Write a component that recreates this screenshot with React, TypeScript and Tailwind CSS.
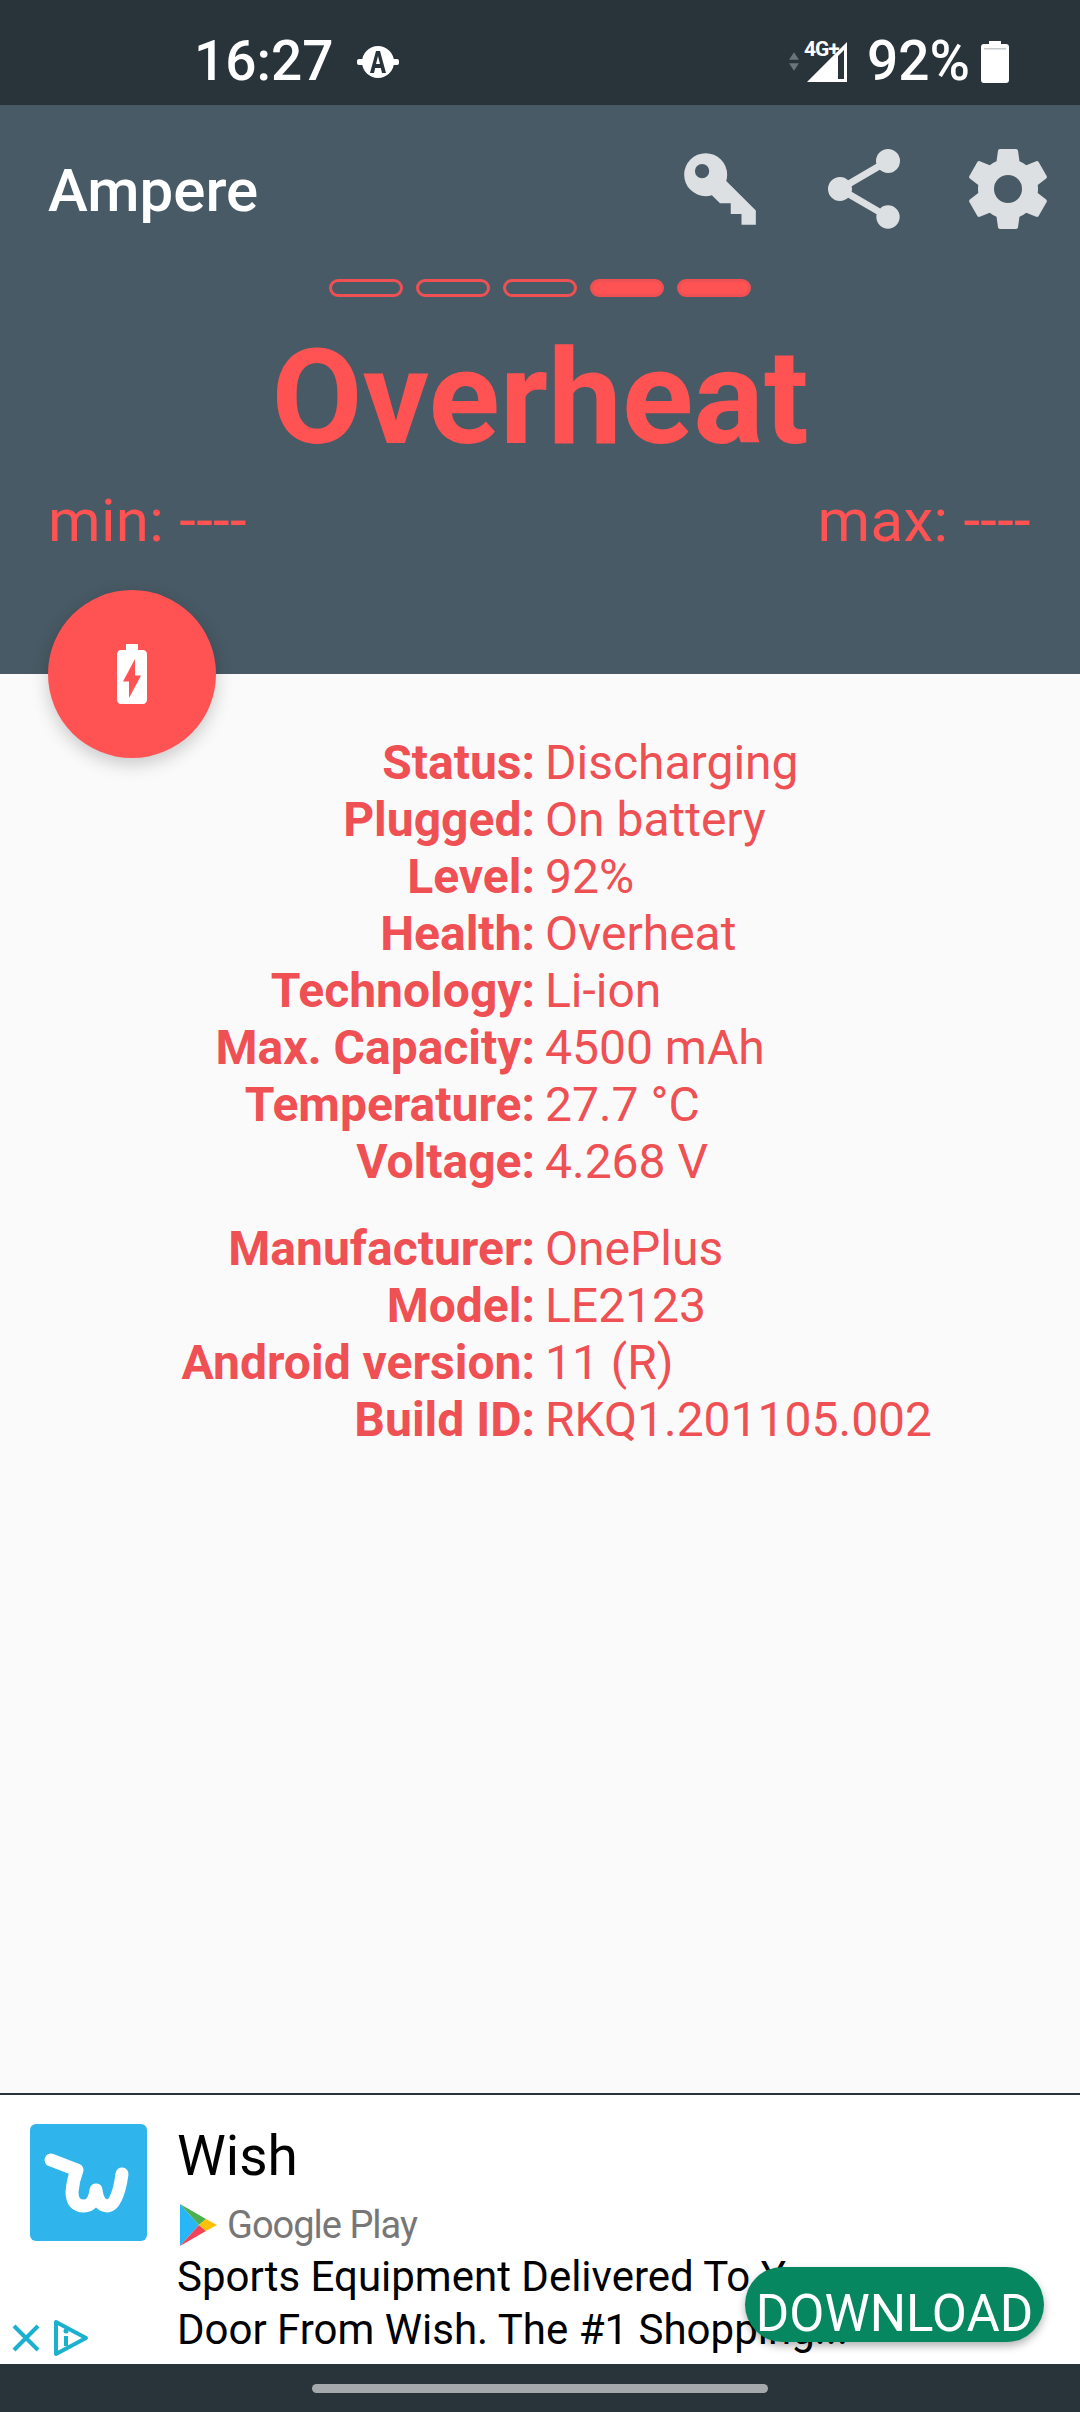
const infoRows = [
  ['Status:', 'Discharging'],
  ['Plugged:', 'On battery'],
  ['Level:', '92%'],
  ['Health:', 'Overheat'],
  ['Technology:', 'Li-ion'],
  ['Max. Capacity:', '4500 mAh'],
  ['Temperature:', '27.7 °C'],
  ['Voltage:', '4.268 V'],
];

const deviceRows = [
  ['Manufacturer:', 'OnePlus'],
  ['Model:', 'LE2123'],
  ['Android version:', '11 (R)'],
  ['Build ID:', 'RKQ1.201105.002'],
];

function InfoTable({ rows }: { rows: string[][] }) {
  return (
    <div className="grid grid-cols-[535px_1fr] gap-x-[10px] text-[48px] leading-[57px] text-[#ef5053]">
      {rows.map(([label, value]) => (
        <div key={label} className="contents">
          <span className="text-right font-bold">{label}</span>
          <span>{value}</span>
        </div>
      ))}
    </div>
  );
}

function StatusBar() {
  return (
    <div className="h-[105px] bg-[#29333a] flex items-center text-white text-[55px] font-medium pl-[194px] pr-[71px] pt-[18px]">
      <span className="leading-none">16:27</span>
      <svg viewBox="0 0 42 42" className="w-[42px] h-[42px] ml-[23px]">
        <circle cx="21" cy="21" r="16" fill="#fff" />
        <rect x="0" y="18" width="42" height="6" rx="2" fill="#fff" />
        <path d="M13 32 19 10h4l6 22h-4l-1.2-5h-5.6L17 32zM19 23h4l-2-8z" fill="#29333a" />
      </svg>
      <div className="flex-1" />
      <svg viewBox="0 0 20 34" className="w-[14px] h-[21px] mr-[6px]">
        <path d="M10 2 18 14H2zM2 20h16l-8 12z" fill="#6b7479" />
      </svg>
      <div className="relative w-[40px] h-[40px]">
        <svg viewBox="0 0 40 40" className="w-[40px] h-[40px]">
          <path d="M0 40 40 0v40zM31 37h6V8l-6 6z" fill="#fff" fillRule="evenodd" />
        </svg>
        <span className="absolute left-[-3px] top-[-3px] text-[21px] leading-[21px] font-bold tracking-[-1px]">4G+</span>
      </div>
      <span className="ml-[20px] leading-none">92%</span>
      <svg viewBox="0 0 28 42" className="w-[28px] h-[42px] ml-[11px]">
        <path d="M8 0h12v3h5a3 3 0 0 1 3 3v33a3 3 0 0 1-3 3H3a3 3 0 0 1-3-3V6a3 3 0 0 1 3-3h5z" fill="#fff" />
        <rect x="3" y="7" width="22" height="1.5" fill="#c5cacc" />
      </svg>
    </div>
  );
}

function Toolbar() {
  return (
    <div className="h-[168px] flex items-center">
      <h1 className="flex-1 pl-[48px] pt-[4px] text-[60px] font-medium text-white">Ampere</h1>
      <button className="w-[144px] flex justify-center">
        <svg viewBox="0 0 24 24" className="w-[86px] h-[86px]" fill="#dce0e3">
          <path d="M22,18V22H18V19H15V16H12L9.74,13.74C9.19,13.91 8.61,14 8,14A6,6 0 0,1 2,8A6,6 0 0,1 8,2A6,6 0 0,1 14,8C14,8.61 13.91,9.19 13.74,9.74L22,18M7,5A2,2 0 0,0 5,7A2,2 0 0,0 7,9A2,2 0 0,0 9,7A2,2 0 0,0 7,5Z" />
        </svg>
      </button>
      <button className="w-[144px] flex justify-center">
        <svg viewBox="0 0 24 24" className="w-[96px] h-[96px]" fill="#dce0e3">
          <path d="M18,16.08C17.24,16.08 16.56,16.38 16.04,16.85L8.91,12.7C8.96,12.47 9,12.24 9,12C9,11.76 8.96,11.53 8.91,11.3L15.96,7.19C16.5,7.69 17.21,8 18,8A3,3 0 0,0 21,5A3,3 0 0,0 18,2A3,3 0 0,0 15,5C15,5.24 15.04,5.47 15.09,5.7L8.04,9.81C7.5,9.31 6.79,9 6,9A3,3 0 0,0 3,12A3,3 0 0,0 6,15C6.79,15 7.5,14.69 8.04,14.19L15.16,18.34C15.11,18.55 15.08,18.77 15.08,19C15.08,20.61 16.39,21.91 18,21.91C19.61,21.91 20.92,20.61 20.92,19A2.92,2.92 0 0,0 18,16.08Z" />
        </svg>
      </button>
      <button className="w-[144px] flex justify-center">
        <svg viewBox="0 0 24 24" className="w-[96px] h-[96px]" fill="#dce0e3">
          <path d="M12 15.5A3.5 3.5 0 0 1 8.5 12 3.5 3.5 0 0 1 12 8.5a3.5 3.5 0 0 1 3.5 3.5 3.5 3.5 0 0 1-3.5 3.5m7.43-2.53c.04-.32.07-.64.07-.97 0-.33-.03-.66-.07-1l2.11-1.63c.19-.15.24-.42.12-.64l-2-3.46c-.12-.22-.39-.31-.61-.22l-2.49 1c-.52-.39-1.06-.73-1.69-.98l-.37-2.65A.506.506 0 0 0 14 2h-4c-.25 0-.46.18-.5.42l-.37 2.65c-.63.25-1.17.59-1.69.98l-2.49-1c-.22-.09-.49 0-.61.22l-2 3.46c-.13.22-.07.49.12.64L4.57 11c-.04.34-.07.67-.07 1 0 .33.03.65.07.97l-2.11 1.66c-.19.15-.25.42-.12.64l2 3.46c.12.22.39.3.61.22l2.49-1.01c.52.4 1.06.74 1.69.99l.37 2.65c.04.24.25.42.5.42h4c.25 0 .46-.18.5-.42l.37-2.65c.63-.26 1.17-.59 1.69-.99l2.49 1.01c.22.08.49 0 .61-.22l2-3.46c.12-.22.07-.49-.12-.64l-2.11-1.66Z" />
        </svg>
      </button>
    </div>
  );
}

function Pills() {
  return (
    <div className="flex justify-center gap-[13px] pt-[6px] pr-[1px]">
      <div className="w-[74px] h-[18px] rounded-full border-[3px] border-[#ef5053]" />
      <div className="w-[74px] h-[18px] rounded-full border-[3px] border-[#ef5053]" />
      <div className="w-[74px] h-[18px] rounded-full border-[3px] border-[#ef5053]" />
      <div className="w-[74px] h-[18px] rounded-full border-[3px] border-[#ef5053] bg-[#ff5252]" />
      <div className="w-[74px] h-[18px] rounded-full border-[3px] border-[#ef5053] bg-[#ff5252]" />
    </div>
  );
}

function AdBanner() {
  return (
    <div className="relative h-[271px] bg-white flex overflow-hidden border-t-[2px] border-[#29333a]">
      <div className="w-[177px] shrink-0 pl-[30px] pt-[29px]">
        <div className="w-[117px] h-[117px] rounded-[6px] bg-[#2fb5ec]">
          <svg viewBox="0 0 117 117" className="w-[117px] h-[117px]">
            <path d="M21 36 47 46Q43 56 42 68Q42 82 54 82Q64 82 66 66Q68 82 78 82Q88 80 92 50" fill="none" stroke="#fff" strokeWidth="13" strokeLinecap="round" strokeLinejoin="round" />
          </svg>
        </div>
      </div>
      <div className="flex-1 text-black">
        <div className="text-[55px] leading-[64px] pt-[29px]">Wish</div>
        <div className="flex items-center h-[56px] mt-[9px] pl-[3px]">
          <svg viewBox="0 0 37 44" className="w-[37px] h-[44px]">
            <path d="M0 1v42l19-21z" fill="#29b6f6" />
            <path d="M0 1l26 15-7 6z" fill="#4caf50" />
            <path d="M0 43l26-15-7-6z" fill="#f44356" />
            <path d="M26 16l11 6-11 6-7-6z" fill="#ffc107" />
          </svg>
          <span className="ml-[10px] text-[38px] tracking-[-1px] text-[#777]">Google Play</span>
        </div>
        <div className="text-[42px] leading-[53px] -mt-[3px] whitespace-nowrap">
          <div>Sports Equipment Delivered To Your</div>
          <div>Door From Wish. The #1 Shopping...</div>
        </div>
      </div>
      <svg viewBox="0 0 28 28" className="absolute left-[12px] bottom-[12px] w-[28px] h-[28px]">
        <path d="M2 2l24 24M26 2 2 26" stroke="#1bb0ce" strokeWidth="4" fill="none" />
      </svg>
      <svg viewBox="0 0 36 38" className="absolute left-[53px] bottom-[7px] w-[36px] h-[38px]">
        <path d="M3 3v32L33 19z" stroke="#1bb0ce" strokeWidth="4" strokeLinejoin="round" fill="none" />
        <path d="M13 17v10" stroke="#1bb0ce" strokeWidth="4" />
        <circle cx="13" cy="12" r="2.5" fill="#1bb0ce" />
      </svg>
      <button className="absolute left-[745px] top-[172px] w-[299px] h-[75px] rounded-full bg-[#07875f] text-white text-[51px] leading-none pt-[18px] whitespace-nowrap shadow-[0_4px_8px_rgba(0,0,0,0.3)]">
        DOWNLOAD
      </button>
    </div>
  );
}

export default function App() {
  return (
    <div className="w-[1080px] h-[2412px] flex flex-col bg-[#fafafa] font-['Roboto',sans-serif]">
      <StatusBar />
      <header className="relative h-[569px] shrink-0 bg-[#485a65]">
        <Toolbar />
        <Pills />
        <div className="text-center text-[132px] leading-[150px] font-bold text-[#ff5252] mt-[26px]">Overheat</div>
        <div className="flex justify-between pl-[48px] pr-[49px] text-[60px] leading-[64px] tracking-[0.3px] text-[#ff5252] mt-[16px]">
          <span>min: ----</span>
          <span>max: ----</span>
        </div>
        <div className="absolute left-[48px] bottom-[-84px] w-[168px] h-[168px] rounded-full bg-[#ff5252] flex items-center justify-center shadow-[0_6px_18px_rgba(0,0,0,0.2)]">
          <svg viewBox="0 0 24 24" className="w-[72px] h-[72px]" fill="#fff">
            <path d="M15.67 4H14V2h-4v2H8.33C7.6 4 7 4.6 7 5.33v15.33C7 21.4 7.6 22 8.33 22h7.33c.74 0 1.34-.6 1.34-1.33V5.33C17 4.6 16.4 4 15.67 4zM11 20v-5.5H9L13 7v5.5h2L11 20z" />
          </svg>
        </div>
      </header>
      <main className="flex-1 pt-[60px] flex flex-col gap-[30px]">
        <InfoTable rows={infoRows} />
        <InfoTable rows={deviceRows} />
      </main>
      <AdBanner />
      <div className="h-[48px] shrink-0 bg-[#29333a] flex justify-center pt-[20px]">
        <div className="w-[456px] h-[9px] rounded-full bg-[#a5a9ac]" />
      </div>
    </div>
  );
}
